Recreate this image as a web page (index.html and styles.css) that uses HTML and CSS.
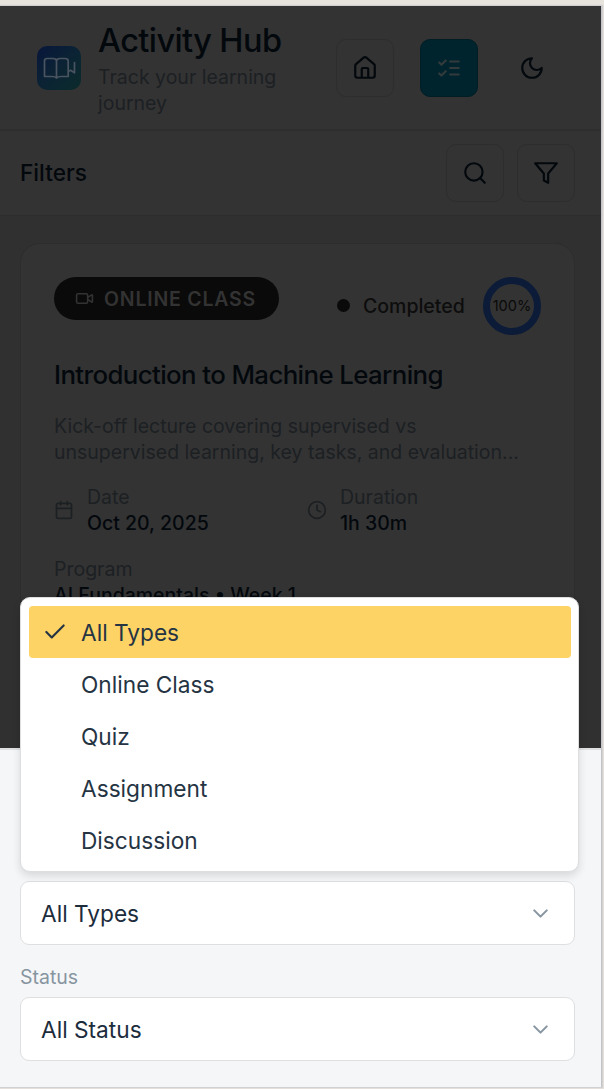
FILE: index.html
```html
<!DOCTYPE html>
<html lang="en">
<head>
<meta charset="utf-8">
<title>Activity Hub</title>
<link rel="stylesheet" href="styles.css">
</head>
<body>
<div class="device">
  <main class="page">
    <header class="header">
      <div class="logo">
        <svg class="icon logo-icon" viewBox="0 0 33 22"><path d="M13.5 4Q13.500 1.500 10 1.500H4Q1.500 1.500 1.500 4V19.500H9Q12.500 19.500 13.500 21Q14.500 19.500 18 19.500H25.200V4Q25.200 1.500 22 1.500H17Q13.500 1.500 13.500 4V21M25.200 14.500L27.500 13.300L31.500 15.800V5.500"/></svg>
      </div>
      <div class="brand">
        <h1 class="brand-title">Activity Hub</h1>
        <p class="brand-sub">Track your learning<br>journey</p>
      </div>
      <nav class="nav">
        <span class="button"><svg class="icon" viewBox="0 0 24 24"><path d="M15 21v-8a1 1 0 0 0-1-1h-4a1 1 0 0 0-1 1v8M3 10a2 2 0 0 1 .709-1.528l7-5.999a2 2 0 0 1 2.582 0l7 5.999A2 2 0 0 1 21 10v9a2 2 0 0 1-2 2H5a2 2 0 0 1-2-2z"/></svg></span>
        <span class="button active"><svg class="icon" viewBox="0 0 24 24"><path d="m3 17 2 2 4-4M3 7l2 2 4-4M13 6h8M13 12h8M13 18h8"/></svg></span>
        <span class="button plain"><svg class="icon" viewBox="0 0 24 24"><path d="M12 3a6 6 0 0 0 9 9 9 9 0 1 1-9-9Z"/></svg></span>
      </nav>
    </header>
    <section class="filters">
      <h2 class="filters-title">Filters</h2>
      <div class="filter-actions">
        <span class="button"><svg class="icon" viewBox="0 0 24 24"><circle cx="11" cy="11" r="8"/><path d="m21 21-4.300-4.300"/></svg></span>
        <span class="button"><svg class="icon" viewBox="0 0 24 24"><path d="M22 3H2l8 9.460V19l4 2v-8.540L22 3z"/></svg></span>
      </div>
    </section>
    <div class="content">
      <article class="card">
        <div class="card-top">
          <span class="badge"><svg class="icon badge-icon" viewBox="0 0 24 24"><path d="m16 13 5.223 3.482a.5.500 0 0 0 .777-.416V7.870a.5.500 0 0 0-.752-.432L16 10.500"/><rect x="2" y="6" width="14" height="12" rx="2"/></svg>ONLINE CLASS</span>
          <span class="state"><i class="dot"></i><span class="state-text">Completed</span></span>
          <span class="ring"><span class="ring-text">100%</span></span>
        </div>
        <h3 class="card-title">Introduction to Machine Learning</h3>
        <p class="desc">Kick-off lecture covering supervised vs<br>unsupervised learning, key tasks, and evaluation...</p>
        <div class="meta">
          <div class="meta-item">
            <svg class="icon meta-icon" viewBox="0 0 24 24"><path d="M8 2v4M16 2v4M3 10h18"/><rect x="3" y="4" width="18" height="18" rx="2"/></svg>
            <div><div class="label">Date</div><div class="value">Oct 20, 2025</div></div>
          </div>
          <div class="meta-item">
            <svg class="icon meta-icon" viewBox="0 0 24 24"><circle cx="12" cy="12" r="10"/><path d="M12 6v6l4 2"/></svg>
            <div><div class="label">Duration</div><div class="value">1h 30m</div></div>
          </div>
        </div>
        <div class="program"><div class="label">Program</div><div class="value program-value">AI Fundamentals • Week 1</div></div>
      </article>
    </div>
  </main>
  <section class="sheet">
    <div class="select"><span>All Types</span><svg class="icon chevron" viewBox="0 0 24 24"><path d="m6 9 6 6 6-6"/></svg></div>
    <div class="field-label">Status</div>
    <div class="select"><span>All Status</span><svg class="icon chevron" viewBox="0 0 24 24"><path d="m6 9 6 6 6-6"/></svg></div>
  </section>
  <div class="menu">
    <div class="option selected"><svg class="icon check" viewBox="0 0 24 24"><path d="M20 6 9 17l-5-5"/></svg>All Types</div>
    <div class="option">Online Class</div>
    <div class="option">Quiz</div>
    <div class="option">Assignment</div>
    <div class="option">Discussion</div>
  </div>
</div>
</body>
</html>
```
FILE: styles.css
```css
* { box-sizing: border-box; }
body { margin: 0; height: 1089px; overflow: hidden; padding-top: 6px; background: #e7e3dd; font-family: Inter, "Liberation Sans", sans-serif; }
h1, h2, h3, p { margin: 0; }
.device { width: 602px; height: 1081px; border-right: 1px solid #c3c4c9; position: relative; box-shadow: 0 0 1px 1px #d2d1d2; background: #f5f6f8; }
.page { height: 742px; overflow: hidden; background: #303030; color: #03080d; }
.icon { display: block; flex: none; width: 26px; height: 26px; fill: none; stroke: currentColor; stroke-width: 2; stroke-linecap: round; stroke-linejoin: round; }
.header { height: 125px; padding: 0 39px 0 37px; display: flex; align-items: center; background: #333; border-bottom: 2px solid #2e2e2e; }
.logo { width: 44px; height: 44px; border-radius: 10px; background: linear-gradient(135deg, #08163b, #0b2334 50%, #0b2b2b); display: grid; place-items: center; color: #4a5360; }
.logo-icon { width: 33px; height: 22px; stroke-width: 1.7; }
.brand { width: 220px; margin-left: 17px; padding-top: 1px; }
.brand-title { font-size: 32.5px; line-height: 40px; font-weight: 500; letter-spacing: -0.6px; white-space: nowrap; }
.brand-sub { margin-top: 3px; font-size: 19.5px; line-height: 26px; color: #1c2023; white-space: nowrap; }
.nav { display: flex; gap: 26px; margin-left: 18px; }
.button { width: 58px; height: 58px; flex: none; border: 1px solid #2d2d2d; border-radius: 10px; display: grid; place-items: center; color: #03080d; }
.active { background: #00242e; border-color: #001d25; color: #323a3c; }
.plain { border-color: transparent; margin-left: -1px; }
.filters { height: 85px; padding: 0 26px 0 20px; display: flex; align-items: center; justify-content: space-between; background: #333; border-bottom: 1px solid #2d2d2d; }
.filters-title { font-size: 22.700px; line-height: 32px; font-weight: 500; }
.filter-actions { display: flex; gap: 13px; }
.content { padding: 27px 26px 0 20px; }
.card { height: 560px; padding: 32px 33px; background: #333; border: 1px solid #2d2d2d; border-radius: 20px; }
.card-top { display: flex; }
.badge { width: 225px; height: 43px; margin-top: 1px; padding-left: 21px; border-radius: 22px; background: #0a0a0a; color: #333; display: flex; align-items: center; gap: 10px; font-size: 19.500px; font-weight: 600; letter-spacing: 0.800px; white-space: nowrap; }
.badge-icon { width: 19px; height: 19px; }
.state { display: flex; align-items: center; gap: 13px; margin-left: 58px; height: 59px; color: #0d0d0d; font-size: 19.500px; font-weight: 500; }
.dot { width: 13px; height: 13px; border-radius: 50%; background: #0a0a0a; }
.ring { width: 58px; height: 58px; margin: 1px 0 0 auto; border: 7px solid #0b1b38; border-radius: 50%; display: grid; place-items: center; font-size: 14.600px; color: #0a0a0a; }
.card-title { margin-top: 23px; font-size: 25.800px; line-height: 34px; font-weight: 500; letter-spacing: -0.600px; white-space: nowrap; }
.desc { margin-top: 21px; font-size: 19.500px; line-height: 26px; color: #1c2023; white-space: nowrap; }
.meta { display: grid; grid-template-columns: 253px 1fr; margin-top: 19px; }
.meta-item { display: flex; align-items: center; gap: 13px; }
.meta-icon { width: 20px; height: 20px; color: #1c2023; }
.label, .value { font-size: 19.500px; line-height: 26px; white-space: nowrap; }
.label { color: #1c2023; }
.value { font-weight: 500; }
.program { margin-top: 20px; }
.sheet { height: 339px; padding: 131px 26px 0 20px; border-top: 2px solid #dfe0e2; background: #f5f6f8; color: #1c2c3c; }
.select { height: 64px; padding: 0 21px 0 20px; display: flex; align-items: center; justify-content: space-between; background: #fff; border: 1px solid #dedfe1; border-radius: 9px; font-size: 22.700px; }
.chevron { color: #8795a1; width: 25px; height: 25px; }
.field-label { height: 52px; padding-top: 19px; font-size: 19.500px; line-height: 26px; color: #8795a1; }
.menu { position: absolute; left: 20px; top: 591px; width: 559px; height: 275px; padding: 8px 7px 8px 8px; background: #fff; border: 1px solid #dddee0; border-radius: 10px; box-shadow: 0 4px 8px rgba(0, 0, 0, .12); color: #253443; }
.option { height: 52px; padding-left: 52px; display: flex; align-items: center; font-size: 22.700px; border-radius: 4px; }
.selected { background: #fdd365; padding-left: 13px; gap: 13px; }
.check { width: 26px; height: 26px; }
```
